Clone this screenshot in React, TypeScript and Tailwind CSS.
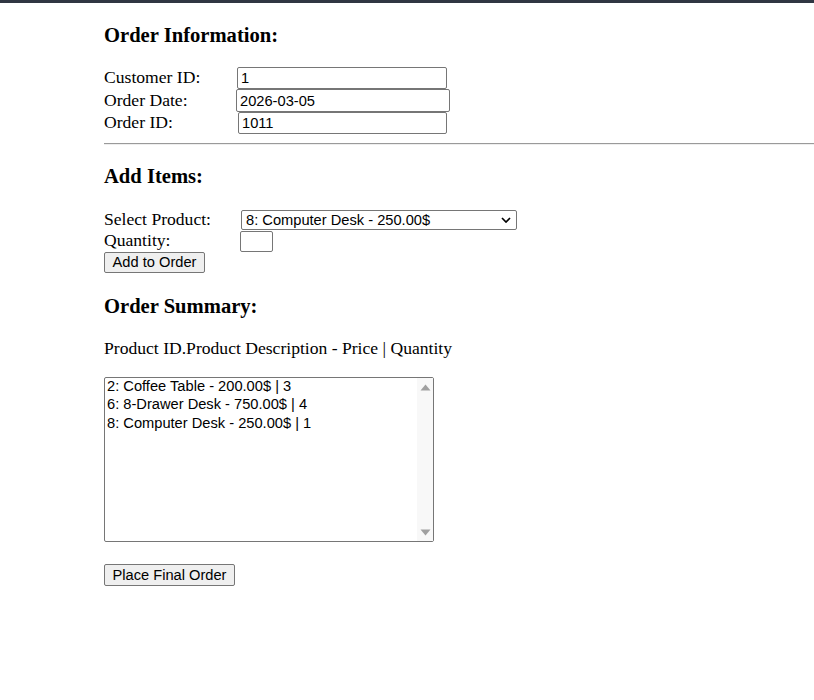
import React from "react";

const inputCls =
  "box-border block border border-[#767676] rounded-[2px] bg-white px-[3px] font-['Liberation_Sans',Arial,sans-serif] text-[14.67px] text-black outline-none";
const btnCls =
  "box-border block border border-[#767676] rounded-[2px] bg-[#efefef] px-[7px] font-['Liberation_Sans',Arial,sans-serif] text-[14.67px] leading-[17px] text-black";

export default function App() {
  const items = [
    "2: Coffee Table - 200.00$ | 3",
    "6: 8-Drawer Desk - 750.00$ | 4",
    "8: Computer Desk - 250.00$ | 1",
  ];
  return (
    <div className="min-h-[700px] bg-white font-['Liberation_Serif','Times_New_Roman',serif] text-[17.6px] text-black">
      <div className="h-[3px] bg-[#303642]" />
      <div className="pl-[104px]">
        <h3 className="mt-[21px] h-[22px] text-[20.6px] font-bold leading-[22px]">Order Information:</h3>

        <div className="mt-[21px] flex flex-col">
          <div className="flex h-[22px] items-center">
            <span className="w-[133px] leading-[20px] -translate-y-[1px]">Customer ID:</span>
            <input readOnly value="1" className={inputCls + " h-[22px] w-[210px]"} />
          </div>
          <div className="flex h-[23px] items-center">
            <span className="w-[132px] leading-[20px] -translate-y-[1px]">Order Date:</span>
            <input readOnly value="2026-03-05" className={inputCls + " h-[23px] w-[214px]"} />
          </div>
          <div className="flex h-[22px] items-center">
            <span className="w-[134px] leading-[20px] -translate-y-[1px]">Order ID:</span>
            <input readOnly value="1011" className={inputCls + " h-[22px] w-[209px]"} />
          </div>
        </div>

        <div className="mt-[9px] h-[2px] border-t border-b border-t-[#9a9a9a] border-b-[#eeeeee]" />

        <h3 className="mt-[20px] h-[22px] text-[20.6px] font-bold leading-[22px]">Add Items:</h3>

        <div className="mt-[23px] flex flex-col">
          <div className="flex h-[20px] items-center">
            <span className="w-[137px] leading-[20px] -translate-y-[1px]">Select Product:</span>
            <div className="box-border flex h-[20px] w-[276px] items-center justify-between rounded-[2px] border border-[#767676] bg-white pl-[4px] pr-[5px] font-['Liberation_Sans',Arial,sans-serif] text-[14.67px] leading-[17px]">
              <span>8: Computer Desk - 250.00$</span>
              <svg width="10" height="6" viewBox="0 0 10 6">
                <path d="M1 1 L5 5 L9 1" fill="none" stroke="#000" strokeWidth="1.7" />
              </svg>
            </div>
          </div>
          <div className="flex h-[22px] items-center">
            <span className="w-[136px] leading-[20px] -translate-y-[1px]">Quantity:</span>
            <input readOnly value="" className={inputCls + " mt-[1px] h-[21px] w-[33px]"} />
          </div>
          <div className="flex">
            <button className={btnCls + " h-[21px] w-[101px]"}>Add to Order</button>
          </div>
        </div>

        <h3 className="mt-[22px] h-[22px] text-[20.6px] font-bold leading-[22px]">Order Summary:</h3>

        <p className="mt-[22px] h-[18px] leading-[18px]">Product ID.Product Description - Price | Quantity</p>

        <div className="mt-[20px] box-border flex h-[165px] w-[330px] rounded-[2px] border border-[#767676] bg-white">
          <div className="flex-1 pl-[2px] font-['Liberation_Sans',Arial,sans-serif] text-[14.67px] -translate-y-[1px]">
            {items.map((t) => (
              <div key={t} className="h-[18.4px] leading-[18.4px]">
                {t}
              </div>
            ))}
          </div>
          <div className="flex w-[16px] flex-col justify-between bg-[#f8f8f8] pt-[5px] pb-[4px]">
            <svg width="16" height="8" viewBox="0 0 16 8">
              <path d="M3.5 7.5 L8.5 1.5 L13.5 7.5 Z" fill="#a0a0a0" />
            </svg>
            <svg width="16" height="8" viewBox="0 0 16 8">
              <path d="M3.5 0.5 L8.5 6.5 L13.5 0.5 Z" fill="#a0a0a0" />
            </svg>
          </div>
        </div>

        <div className="mt-[22px] flex">
          <button className={btnCls + " h-[22px] w-[131px]"}>Place Final Order</button>
        </div>
      </div>
    </div>
  );
}
